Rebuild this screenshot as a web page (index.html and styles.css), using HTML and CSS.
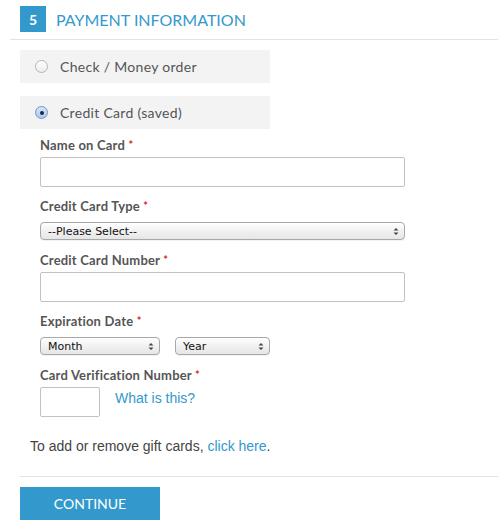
FILE: index.html
```html
<!DOCTYPE html>
<html>
<head>
<meta charset="utf-8">
<link rel="stylesheet" href="styles.css">
</head>
<body>
<div class="page">
  <div class="step-head">
    <span class="badge">5</span>
    <span class="step-title">PAYMENT INFORMATION</span>
  </div>
  <div class="methods">
    <div class="method"><span class="radio"></span><span class="method-label">Check / Money order</span></div>
    <div class="method"><span class="radio checked"></span><span class="method-label">Credit Card (saved)</span></div>
  </div>
  <div class="form">
    <div class="field">
      <div class="label">Name on Card <em>*</em></div>
      <div class="input wide"></div>
    </div>
    <div class="field sel">
      <div class="label">Credit Card Type <em>*</em></div>
      <div class="select wide"><span>--Please Select--</span><svg width="6" height="9" viewBox="0 0 6 9"><path d="M0.5 3.5 L3 1 L5.5 3.5 Z M0.5 5.5 L3 8 L5.5 5.5 Z" fill="#444"/></svg></div>
    </div>
    <div class="field">
      <div class="label">Credit Card Number <em>*</em></div>
      <div class="input wide"></div>
    </div>
    <div class="field sel">
      <div class="label">Expiration Date <em>*</em></div>
      <div class="row">
        <div class="select month"><span>Month</span><svg width="6" height="9" viewBox="0 0 6 9"><path d="M0.5 3.5 L3 1 L5.5 3.5 Z M0.5 5.5 L3 8 L5.5 5.5 Z" fill="#444"/></svg></div>
        <div class="select year"><span>Year</span><svg width="6" height="9" viewBox="0 0 6 9"><path d="M0.5 3.5 L3 1 L5.5 3.5 Z M0.5 5.5 L3 8 L5.5 5.5 Z" fill="#444"/></svg></div>
      </div>
    </div>
    <div class="field">
      <div class="label">Card Verification Number <em>*</em></div>
      <div class="row cvv-row">
        <div class="input cvv"></div>
        <a class="link what">What is this?</a>
      </div>
    </div>
  </div>
  <p class="gift">To add or remove gift cards, <a class="link">click here</a>.</p>
  <div class="actions">
    <button class="continue">CONTINUE</button>
  </div>
</div>
</body>
</html>
```
FILE: styles.css
```css
* { box-sizing: border-box; }
html, body { margin: 0; padding: 0; background: #fff; }
body { font-family: "Open Sans", "Liberation Sans", sans-serif; color: #555; }
.page { width: 498px; }
.step-head {
  display: flex; align-items: center;
  margin-left: 10px; padding: 6px 0 7px 10px;
  border-bottom: 1px solid #e3e3e3;
}
.badge {
  width: 26px; height: 26px; background: #3399cc; color: #fff;
  font-family: "Lato", sans-serif; font-weight: 700; font-size: 14px;
  display: flex; align-items: center; justify-content: center;
}
.step-title {
  margin-left: 10px; color: #3399cc; font-family: "Lato", sans-serif;
  font-size: 16px; font-weight: 400;
}
.methods { padding: 10px 0 0 20px; display: flex; flex-direction: column; gap: 13px; }
.method {
  width: 250px; height: 33px; background: #f3f3f3;
  display: flex; align-items: center; padding-left: 15px;
}
.radio {
  width: 13px; height: 13px; border-radius: 50%;
  border: 1px solid #b5b5b5; background: linear-gradient(#fff, #ececec);
  position: relative;
}
.radio.checked { border-color: #6f94c6; background: linear-gradient(#d6e6f8, #a9c9f0); }
.radio.checked::after {
  content: ""; position: absolute; left: 3.5px; top: 3.5px;
  width: 4px; height: 4px; border-radius: 50%; background: #1a2a40;
}
.method-label { margin-left: 12px; font-size: 14px; color: #555; font-family: "Lato", sans-serif; letter-spacing: 0.3px; }
.form { padding: 8px 0 0 40px; display: flex; flex-direction: column; }
.field { margin-bottom: 11px; }
.field.sel { margin-bottom: 12px; }
.field:last-child { margin-bottom: 0; }
.label { font-family: "Lato", sans-serif; font-weight: 700; font-size: 13px; color: #555; line-height: 16px; margin-bottom: 4px; letter-spacing: 0.2px; }
.sel .label { margin-bottom: 8px; }
.label em { color: #d42a2a; font-style: normal; font-size: 11px; vertical-align: top; }
.input { height: 30px; border: 1px solid #c2c2c2; border-radius: 2px; background: #fff; }
.wide { width: 365px; }
.select {
  height: 18px; border: 1px solid #a8a8a8; border-radius: 4px;
  background: linear-gradient(#ffffff, #f1f1f1 50%, #e6e6e6);
  display: flex; align-items: center; justify-content: space-between;
  padding: 0 5px 0 7px; font-family: "DejaVu Sans", sans-serif; font-size: 11px; color: #111;
  box-shadow: 0 1px 0 rgba(0,0,0,0.05);
}
.row { display: flex; align-items: center; gap: 15px; }
.month { width: 120px; }
.year { width: 95px; }
.cvv-row { align-items: flex-start; }
.cvv { width: 60px; }
.link { color: #3399cc; font-family: "Liberation Sans", sans-serif; font-size: 14px; text-decoration: none; }
.what { margin-top: 3px; }
.gift { margin: 21px 0 0 30px; font-family: "Liberation Sans", sans-serif; font-size: 14px; color: #444; line-height: 17px; }
.actions { margin: 21px 0 0 20px; padding-top: 10px; border-top: 1px solid #e3e3e3; }
.continue {
  width: 140px; height: 33px; background: #3399cc; color: #fff; border: 0;
  font-family: "Lato", sans-serif; font-size: 14px; padding: 0; display: block;
}
```
